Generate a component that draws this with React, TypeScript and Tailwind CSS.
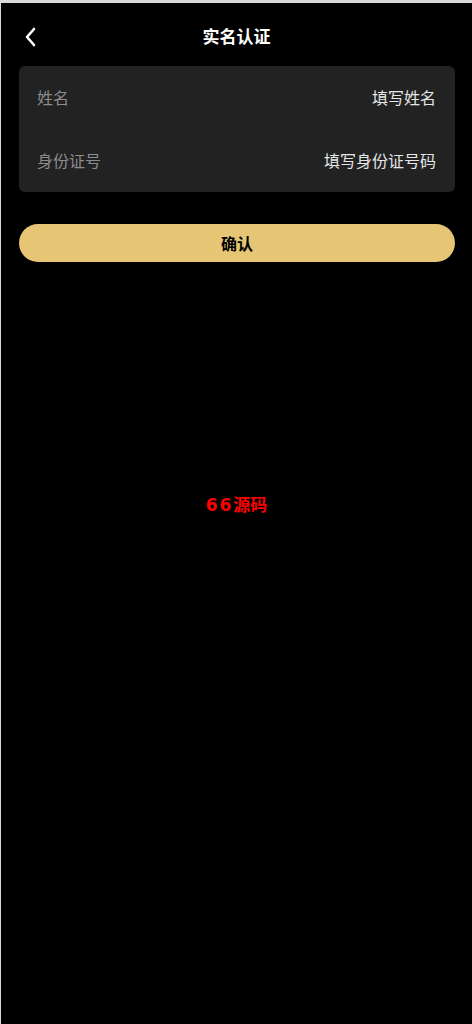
import React from "react";

export default function App() {
  const font = { fontFamily: '"Noto Sans CJK SC", "Noto Sans", sans-serif' };
  return (
    <div className="w-[472px] h-[1024px] bg-[#d9d9d9] pt-[3px] pl-[1px]" style={font}>
      <div className="h-[1021px] bg-black flex flex-col">
        <div className="relative h-[63px] flex items-center justify-center pt-[1px] shrink-0">
          <svg
            className="absolute left-[22px] top-[24px]"
            width="16"
            height="20"
            viewBox="0 0 16 20"
            fill="none"
          >
            <polyline
              points="11,2 4,10 11,18"
              stroke="white"
              strokeWidth="2.6"
              strokeLinecap="round"
              strokeLinejoin="round"
            />
          </svg>
          <span className="text-white text-[17px] font-bold leading-none">实名认证</span>
        </div>
        <div className="ml-[18px] mr-[17px] bg-[#222222] rounded-[6px] pl-[18px] pr-[19px] flex flex-col">
          <div className="h-[63px] flex items-center justify-between">
            <span className="text-[#8c8c8c] text-[16px] -mt-[2px]">姓名</span>
            <span className="text-[#e6e6e6] text-[16px] -mt-[2px]">填写姓名</span>
          </div>
          <div className="h-[63px] flex items-center justify-between">
            <span className="text-[#8c8c8c] text-[16px] -mt-[2px]">身份证号</span>
            <span className="text-[#e6e6e6] text-[16px] -mt-[2px]">填写身份证号码</span>
          </div>
        </div>
        <div className="ml-[18px] mr-[17px] mt-[32px] h-[38px] rounded-full bg-[#e6c674] flex items-center justify-center">
          <span className="text-black text-[16px] font-bold -mt-[1px]">确认</span>
        </div>
        <div className="mt-[229px] text-center">
          <span className="text-[#ff0000] text-[17px] font-bold">
            <span className="tracking-[2px]" style={{ fontFamily: '"DejaVu Sans", sans-serif' }}>66</span>
            源码
          </span>
        </div>
      </div>
    </div>
  );
}
